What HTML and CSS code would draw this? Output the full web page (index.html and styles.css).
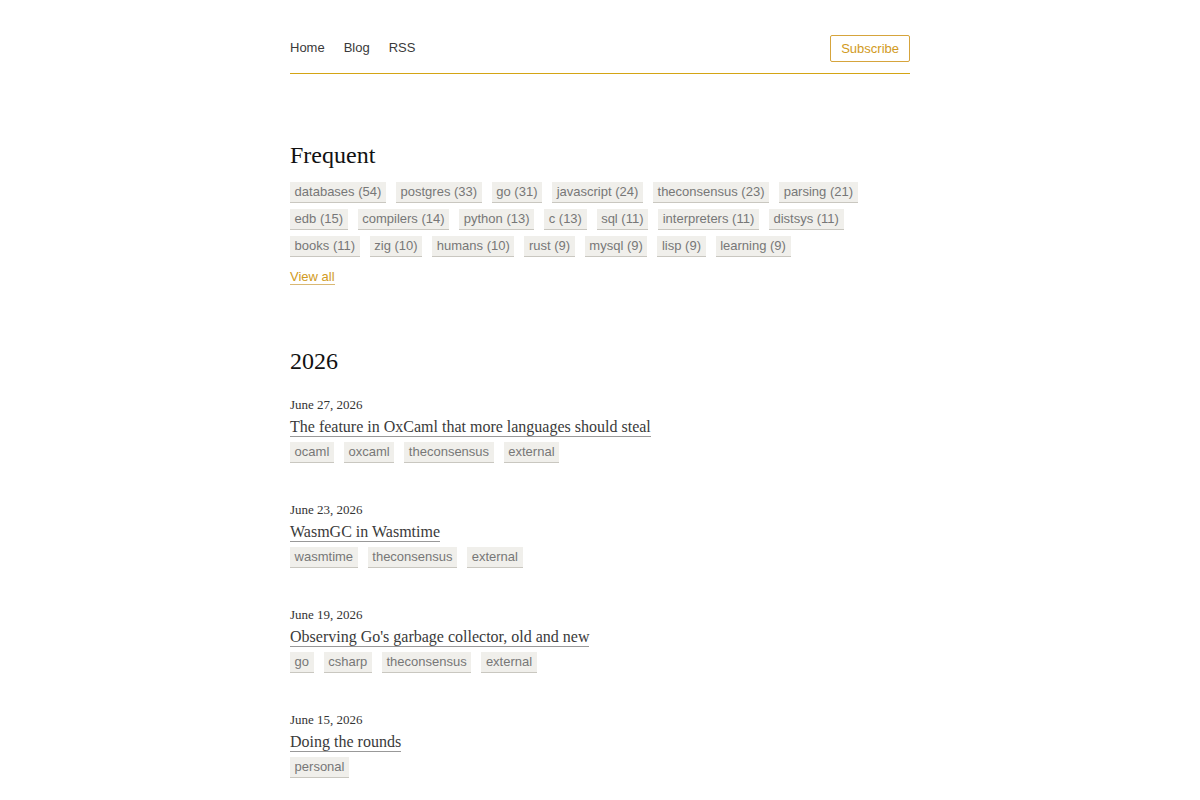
FILE: index.html
```html
<!DOCTYPE html>
<html lang="en">
<head>
    <meta charset="utf-8">
    <meta name="viewport" content="width=device-width, initial-scale=1.0">
    <title>Blog</title>
    <link rel="stylesheet" href="styles.css">
</head>
<body>
    <div class="page">
        <!-- Top navigation -->
        <header class="site-header">
            <nav class="nav">
                <a href="#">Home</a>
                <a href="#">Blog</a>
                <a href="#">RSS</a>
            </nav>
            <a class="subscribe" href="#">Subscribe</a>
        </header>

        <!-- Most used tags -->
        <section class="frequent">
            <h2>Frequent</h2>
            <div class="tags">
                <a class="tag" href="#">databases (54)</a>
                <a class="tag" href="#">postgres (33)</a>
                <a class="tag" href="#">go (31)</a>
                <a class="tag" href="#">javascript (24)</a>
                <a class="tag" href="#">theconsensus (23)</a>
                <a class="tag" href="#">parsing (21)</a>
                <a class="tag" href="#">edb (15)</a>
                <a class="tag" href="#">compilers (14)</a>
                <a class="tag" href="#">python (13)</a>
                <a class="tag" href="#">c (13)</a>
                <a class="tag" href="#">sql (11)</a>
                <a class="tag" href="#">interpreters (11)</a>
                <a class="tag" href="#">distsys (11)</a>
                <a class="tag" href="#">books (11)</a>
                <a class="tag" href="#">zig (10)</a>
                <a class="tag" href="#">humans (10)</a>
                <a class="tag" href="#">rust (9)</a>
                <a class="tag" href="#">mysql (9)</a>
                <a class="tag" href="#">lisp (9)</a>
                <a class="tag" href="#">learning (9)</a>
            </div>
            <a class="view-all" href="#">View all</a>
        </section>

        <!-- Posts by year -->
        <section class="year">
            <h2>2026</h2>

            <div class="post">
                <div class="date">June 27, 2026</div>
                <a class="post-title" href="#">The feature in OxCaml that more languages should steal</a>
                <div class="tags">
                    <a class="tag" href="#">ocaml</a>
                    <a class="tag" href="#">oxcaml</a>
                    <a class="tag" href="#">theconsensus</a>
                    <a class="tag" href="#">external</a>
                </div>
            </div>

            <div class="post">
                <div class="date">June 23, 2026</div>
                <a class="post-title" href="#">WasmGC in Wasmtime</a>
                <div class="tags">
                    <a class="tag" href="#">wasmtime</a>
                    <a class="tag" href="#">theconsensus</a>
                    <a class="tag" href="#">external</a>
                </div>
            </div>

            <div class="post">
                <div class="date">June 19, 2026</div>
                <a class="post-title" href="#">Observing Go's garbage collector, old and new</a>
                <div class="tags">
                    <a class="tag" href="#">go</a>
                    <a class="tag" href="#">csharp</a>
                    <a class="tag" href="#">theconsensus</a>
                    <a class="tag" href="#">external</a>
                </div>
            </div>

            <div class="post">
                <div class="date">June 15, 2026</div>
                <a class="post-title" href="#">Doing the rounds</a>
                <div class="tags">
                    <a class="tag" href="#">personal</a>
                </div>
            </div>
        </section>
    </div>
</body>
</html>
```

FILE: styles.css
```css
body {
    margin: 0;
    background: white;
    color: #333;
    font-family: "Liberation Sans", Arial, sans-serif;
    font-size: 13px;
}
a {
    text-decoration: none;
}
.page {
    width: 620px;
    margin: 0 auto;
}
/* Header */
.site-header {
    display: flex;
    align-items: center;
    justify-content: space-between;
    padding: 35px 0 11px;
    border-bottom: 1px solid #d4a514;
}
.nav {
    display: flex;
    gap: 19px;
    margin-top: -2px;
}
.nav a {
    color: #3a3a3a;
    line-height: 15px;
}
.subscribe {
    color: #d19a22;
    border: 1px solid #d6a43c;
    border-radius: 2px;
    padding: 5px 10px;
    line-height: 15px;
}
/* Section headings */
h2 {
    font-family: "Liberation Serif", "Times New Roman", serif;
    font-weight: normal;
    font-size: 24px;
    line-height: 28px;
    color: #111;
    margin: 0;
}
.frequent {
    margin-top: 67px;
}
.frequent h2 {
    margin-bottom: 13px;
}
/* Tag pills */
.tags {
    display: flex;
    flex-wrap: wrap;
    gap: 6px 10px;
}
.tag {
    color: #777;
    background: #f0efeb;
    border-bottom: 1px solid #c9c7c0;
    padding: 2px 4.6px;
    line-height: 16px;
}
.view-all {
    display: inline-block;
    margin-top: 12px;
    color: #d19a22;
    line-height: 15px;
    border-bottom: 1px solid #d9b874;
}
/* Yearly post list */
.year {
    margin-top: 62px;
}
.year h2 {
    margin-bottom: 22px;
}
.post {
    margin-bottom: 39px;
}
.date {
    font-family: "Liberation Serif", "Times New Roman", serif;
    font-size: 13px;
    line-height: 15px;
    color: #333;
    margin-bottom: 5px;
}
.post-title {
    display: inline-block;
    font-family: "Liberation Serif", "Times New Roman", serif;
    font-size: 16px;
    line-height: 19px;
    color: #3a3a3a;
    border-bottom: 1px solid #999;
    margin-bottom: 5px;
}
```
